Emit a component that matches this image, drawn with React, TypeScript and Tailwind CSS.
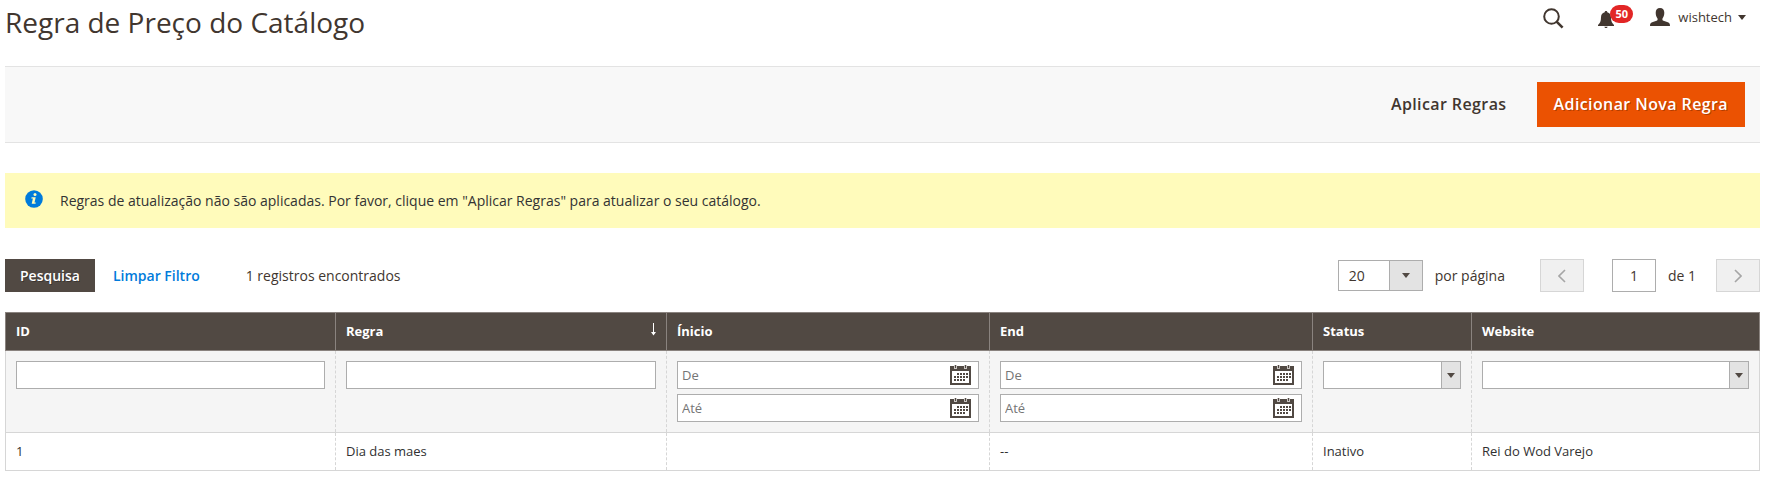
import type { ReactNode } from "react";

const columns = [
  { label: "ID", width: "w-[330px]" },
  { label: "Regra", width: "w-[331px]", sorted: true },
  { label: "Ínicio", width: "w-[323px]" },
  { label: "End", width: "w-[323px]" },
  { label: "Status", width: "w-[159px]" },
  { label: "Website", width: "w-[288px]" },
];

const rows = [["1", "Dia das maes", "", "--", "Inativo", "Rei do Wod Varejo"]];

function Caret() {
  return (
    <svg width="8" height="5" viewBox="0 0 8 5" aria-hidden="true">
      <path d="M0 0h8L4 5z" fill="currentColor" />
    </svg>
  );
}

function SearchIcon() {
  return (
    <svg width="21" height="21" viewBox="0 0 21 21" fill="none" stroke="#41362f" aria-hidden="true">
      <circle cx="8.5" cy="8.5" r="7.3" strokeWidth="2" />
      <path d="M13.6 13.6l6 6" strokeWidth="2.6" />
    </svg>
  );
}

function BellIcon() {
  return (
    <svg width="16" height="17" viewBox="0 0 16 17" fill="#41362f" aria-hidden="true">
      <path d="M8 0c-.8 0-1.3.5-1.3 1.2C4.3 1.8 3 3.8 3 6.3c0 4.200-1 6-3 7.700v1h16v-1c-2-1.700-3-3.500-3-7.700 0-2.500-1.300-4.500-3.700-5.100C9.3.5 8.8 0 8 0z" />
      <path d="M6.3 15.8h3.400c-.3.9-.9 1.200-1.700 1.200s-1.400-.3-1.700-1.200z" />
    </svg>
  );
}

function UserIcon() {
  return (
    <svg width="20" height="18" viewBox="0 0 20 18" fill="#41362f" aria-hidden="true">
      <path d="M10 0C7.2 0 5.7 1.9 5.7 4.8c0 2.200.7 4.400 1.800 5.600.3 1.200 0 2-1 2.400l-4.300 1.500C.6 14.900 0 16 0 18h20c0-2-.6-3.100-2.200-3.700l-4.300-1.500c-1-.4-1.300-1.200-1-2.400 1.100-1.200 1.800-3.400 1.800-5.600C14.3 1.9 12.8 0 10 0z" />
    </svg>
  );
}

function InfoIcon() {
  return (
    <svg width="18" height="18" viewBox="0 0 18 18" aria-hidden="true">
      <circle cx="9" cy="9" r="8.8" fill="#007bdb" />
      <circle cx="10" cy="4.4" r="1.5" fill="#fffbbb" />
      <path d="M6.6 7.200h4.100l-1.200 5.300h1.300l-.3 1.300H6.700l1.200-5.300H6.300z" fill="#fffbbb" />
    </svg>
  );
}

function CalendarIcon() {
  return (
    <svg width="21" height="20" viewBox="0 0 21 20" shapeRendering="crispEdges" aria-hidden="true">
      <path d="M0 1h21v19H0z" fill="#514943" />
      <path d="M2 6h17v12H2z" fill="#fff" />
      <path d="M4 0h3v4H4zM14 0h3v4h-3z" fill="#c9c5c2" />
      <path d="M5 0h1v3H5zM15 0h1v3h-1z" fill="#514943" />
      <path
        d="M7 8h2v2H7zM10 8h2v2h-2zM13 8h2v2h-2zM16 8h2v2h-2zM4 11h2v2H4zM7 11h2v2H7zM10 11h2v2h-2zM13 11h2v2h-2zM16 11h2v2h-2zM4 14h2v2H4zM7 14h2v2H7zM10 14h2v2h-2zM13 14h2v2h-2z"
        fill="#514943"
      />
    </svg>
  );
}

function PagerButton({ label, path }: { label: string; path: string }) {
  return (
    <button
      type="button"
      disabled
      aria-label={label}
      className="flex h-[33px] w-11 items-center justify-center border border-[#d6d6d6] bg-[#f0f0f0] text-[#a6a6a6]"
    >
      <svg width="8" height="14" viewBox="0 0 8 14" fill="none" stroke="currentColor" strokeWidth="1.6">
        <path d={path} />
      </svg>
    </button>
  );
}

function FilterSelect({ label }: { label: string }) {
  return (
    <div className="relative">
      <select
        aria-label={label}
        className="block h-7 w-full appearance-none border border-[#adadad] bg-white pl-1 pr-6 text-[13px]"
      >
        <option value=""></option>
      </select>
      <span className="pointer-events-none absolute inset-y-0 right-0 flex w-5 items-center justify-center border border-[#adadad] bg-[#e3e3e3] text-[#514943]">
        <Caret />
      </span>
    </div>
  );
}

function DateFilter({ label, placeholder }: { label: string; placeholder: string }) {
  return (
    <div className="relative">
      <input
        type="text"
        aria-label={label}
        placeholder={placeholder}
        className="block h-7 w-full border border-[#adadad] bg-white pl-1 pr-8 text-[13px] placeholder:text-[#757575]"
      />
      <button type="button" aria-label="Calendário" className="absolute inset-y-0 right-2 flex items-center">
        <CalendarIcon />
      </button>
    </div>
  );
}

function FilterCell({ children }: { children: ReactNode }) {
  return (
    <td className="border-x border-dashed border-[#d6d6d6] p-[10px] align-top first:border-l-0 last:border-r-0">
      {children}
    </td>
  );
}

export default function App() {
  return (
    <div className="bg-white pl-[5px] pr-[10px] font-['Open_Sans',sans-serif] text-sm text-[#41362f]">
      <header className="flex items-start justify-between pb-[27px] pt-[5px]">
        <h1 className="text-[28px] leading-[34px]">Regra de Preço do Catálogo</h1>
        <div className="flex h-6 items-center pr-[14px]">
          <button type="button" aria-label="Buscar" className="mr-[34px] pt-[2px]">
            <SearchIcon />
          </button>
          <button type="button" aria-label="Notificações" className="relative mr-9 pt-1">
            <BellIcon />
            <span className="absolute -top-[2px] left-3 flex h-[18px] w-[23px] items-center justify-center rounded-full bg-[#e22626] text-[11px] font-bold text-white">
              50
            </span>
          </button>
          <button type="button" className="flex items-center text-[13px]">
            <UserIcon />
            <span className="ml-2 mr-[6px] leading-5">wishtech</span>
            <Caret />
          </button>
        </div>
      </header>

      <div className="flex items-center justify-end gap-[14px] border-y border-[#e3e3e3] bg-[#f8f8f8] py-[15px] pr-[15px]">
        <button type="button" className="h-[45px] px-4 pb-[2px] text-base font-semibold tracking-wide">
          Aplicar Regras
        </button>
        <button
          type="button"
          className="h-[45px] bg-[#eb5202] px-[17px] pb-[2px] text-base font-semibold tracking-wide text-white [text-shadow:1px_1px_0_rgba(0,0,0,0.25)]"
        >
          Adicionar Nova Regra
        </button>
      </div>

      <div className="mt-[30px] flex items-start bg-[#fffbbb] py-[17px] pl-5" role="status">
        <InfoIcon />
        <span className="ml-[17px] pt-px text-[#333333]">
          Regras de atualização não são aplicadas. Por favor, clique em "Aplicar Regras" para atualizar o seu catálogo.
        </span>
      </div>

      <div className="mt-[31px] flex items-center justify-between">
        <div className="flex items-center">
          <button
            type="button"
            className="h-[33px] bg-[#514943] px-[15px] font-semibold text-white [text-shadow:1px_1px_0_rgba(0,0,0,0.3)]"
          >
            Pesquisa
          </button>
          <button type="button" className="ml-[3px] h-[33px] px-[15px] font-semibold text-[#007bdb]">
            Limpar Filtro
          </button>
          <span className="ml-[31px]">1 registros encontrados</span>
        </div>

        <div className="flex items-center">
          <div className="relative">
            <select
              id="porPagina"
              defaultValue="20"
              className="block h-[31px] w-[85px] appearance-none border border-[#adadad] bg-white pl-[10px] text-sm"
            >
              <option>20</option>
              <option>30</option>
              <option>50</option>
              <option>100</option>
              <option>200</option>
            </select>
            <span className="pointer-events-none absolute inset-y-0 right-0 flex w-[34px] items-center justify-center border border-[#adadad] bg-[#e3e3e3] text-[#514943]">
              <Caret />
            </span>
          </div>
          <label htmlFor="porPagina" className="ml-3 mr-[35px]">
            por página
          </label>
          <PagerButton label="Página anterior" path="M7 1L1 7l6 6" />
          <input
            type="text"
            id="pagina"
            defaultValue="1"
            className="ml-7 h-[33px] w-11 border border-[#adadad] bg-white text-center text-sm"
          />
          <label htmlFor="pagina" className="ml-3 mr-5">
            de 1
          </label>
          <PagerButton label="Próxima página" path="M1 1l6 6-6 6" />
        </div>
      </div>

      <table className="mt-5 w-full table-fixed border-collapse border border-[#d6d6d6] text-left text-[13px] leading-[17px]">
        <thead>
          <tr className="bg-[#514943] text-white">
            {columns.map((col) => (
              <th key={col.label} className={`${col.width} h-[38px] border border-[#8a837f] px-[10px] font-bold`}>
                <div className="flex items-center justify-between">
                  {col.label}
                  {col.sorted && (
                    <svg width="5" height="17" viewBox="0 0 5 17" aria-hidden="true">
                      <path d="M2 0h1v9h2l-2.500 3.500L0 9h2z" fill="#fff" />
                    </svg>
                  )}
                </div>
              </th>
            ))}
          </tr>
          {/* Filtros */}
          <tr className="h-[82px] border-b border-[#d6d6d6] bg-[#f5f5f5]">
            <FilterCell>
              <input type="text" aria-label="ID" className="block h-7 w-full border border-[#adadad] bg-white px-1" />
            </FilterCell>
            <FilterCell>
              <input type="text" aria-label="Regra" className="block h-7 w-full border border-[#adadad] bg-white px-1" />
            </FilterCell>
            <FilterCell>
              <div className="space-y-[5px]">
                <DateFilter label="Ínicio de" placeholder="De" />
                <DateFilter label="Ínicio até" placeholder="Até" />
              </div>
            </FilterCell>
            <FilterCell>
              <div className="space-y-[5px]">
                <DateFilter label="End de" placeholder="De" />
                <DateFilter label="End até" placeholder="Até" />
              </div>
            </FilterCell>
            <FilterCell>
              <FilterSelect label="Status" />
            </FilterCell>
            <FilterCell>
              <FilterSelect label="Website" />
            </FilterCell>
          </tr>
        </thead>
        <tbody>
          {rows.map((row) => (
            <tr key={row[0]}>
              {row.map((cell, i) => (
                <td
                  key={i}
                  className="h-[38px] border-x border-dashed border-[#d6d6d6] px-[10px] text-[#303030] first:border-l-0 last:border-r-0"
                >
                  {cell}
                </td>
              ))}
            </tr>
          ))}
        </tbody>
      </table>
    </div>
  );
}
